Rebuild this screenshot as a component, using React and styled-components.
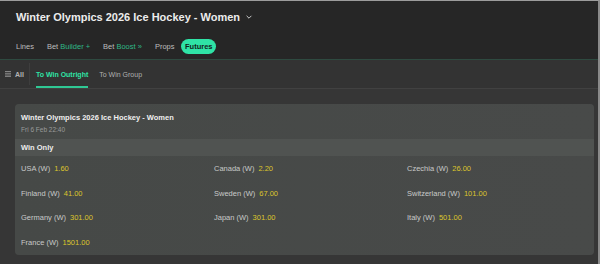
import React from 'react'
import styled, { createGlobalStyle } from 'styled-components'

const GlobalStyle = createGlobalStyle`
  body {
    margin: 0;
    background: #363636;
    font-family: "Liberation Sans", Arial, sans-serif;
  }
`

const Page = styled.div`
  width: 600px;
  height: 264px;
  box-sizing: border-box;
  border-top: 1px solid #9c9c9c;
  border-right: 2px solid #8a8a8a;
  background: #363636;
  overflow: hidden;
`

const Header = styled.div`
  background: #262626;
  padding: 0 16px;
  height: 58px;
  border-bottom: 1px solid #2e4a40;
`

const TitleRow = styled.div`
  height: 32px;
  display: flex;
  align-items: center;
  gap: 5px;
  color: #ececec;
  font-weight: bold;
  font-size: 11px;
`

const NavRow = styled.div`
  height: 26px;
  display: flex;
  align-items: center;
  gap: 1px;
  margin-left: -6px;
`

const NavItem = styled.div`
  padding: 0 ${p => (p.$active ? '3.5px' : '6px')};
  height: 15px;
  line-height: 15px;
  border-radius: 8px;
  font-size: 7.5px;
  color: ${p => (p.$active ? '#12231c' : '#bdbdbd')};
  background: ${p => (p.$active ? '#2fe3a6' : 'transparent')};
  font-weight: ${p => (p.$active ? 'bold' : 'normal')};
`

const Accent = styled.span`
  color: #2fb886;
`

const SubNav = styled.div`
  height: 28px;
  background: #333333;
  border-bottom: 1px solid #414141;
  display: flex;
  align-items: stretch;
  font-size: 7px;
`

const AllButton = styled.div`
  display: flex;
  align-items: center;
  gap: 4px;
  padding: 0 5px;
  color: #b4b4b4;
  font-weight: bold;
  border-right: 1px solid #3e3e3e;
  margin: 3px 0;
`

const Tab = styled.div`
  display: flex;
  align-items: center;
  margin-left: ${p => (p.$first ? '6px' : '11px')};
  color: ${p => (p.$active ? '#2fe3a6' : '#b0b0b0')};
  font-weight: ${p => (p.$active ? 'bold' : 'normal')};
  box-shadow: ${p => (p.$active ? 'inset 0 -2px 0 #2fc894' : 'none')};
`

const Content = styled.div`
  padding: 15px 4px 0 15px;
`

const Card = styled.div`
  width: 579px;
  background: linear-gradient(90deg, #464947, #484a49);
  border-radius: 4px;
  overflow: hidden;
`

const CardHead = styled.div`
  height: 35px;
  box-sizing: border-box;
  padding: 3px 6px 0;
  display: flex;
  flex-direction: column;
  justify-content: center;
  gap: 4px;
`

const CardTitle = styled.div`
  color: #efefef;
  font-weight: bold;
  font-size: 7.5px;
`

const CardDate = styled.div`
  color: #9a9c9b;
  font-size: 6.5px;
`

const Band = styled.div`
  height: 17px;
  background: #505351;
  padding: 0 6px;
  display: flex;
  align-items: center;
  color: #ededed;
  font-weight: bold;
  font-size: 7.5px;
`

const Grid = styled.div`
  display: grid;
  grid-template-columns: repeat(3, 193px);
  grid-auto-rows: 24.8px;
  padding-left: 6px;
`

const Cell = styled.div`
  display: flex;
  align-items: center;
  gap: 4px;
  font-size: 7.5px;
`

const Team = styled.span`
  color: #c8cac9;
`

const Odds = styled.span`
  color: #dcc52c;
`

const teams = [
  ['USA (W)', '1.60'],
  ['Canada (W)', '2.20'],
  ['Czechia (W)', '26.00'],
  ['Finland (W)', '41.00'],
  ['Sweden (W)', '67.00'],
  ['Switzerland (W)', '101.00'],
  ['Germany (W)', '301.00'],
  ['Japan (W)', '301.00'],
  ['Italy (W)', '501.00'],
  ['France (W)', '1501.00'],
]

export default function App() {
  return (
    <Page>
      <GlobalStyle />
      <Header>
        <TitleRow>
          Winter Olympics 2026 Ice Hockey - Women
          <svg width="8" height="8" viewBox="0 0 10 10">
            <path d="M2 3.5 L5 6.5 L8 3.5" fill="none" stroke="#d0d0d0" strokeWidth="1.2" />
          </svg>
        </TitleRow>
        <NavRow>
          <NavItem>Lines</NavItem>
          <NavItem>Bet <Accent>Builder +</Accent></NavItem>
          <NavItem>Bet <Accent>Boost »</Accent></NavItem>
          <NavItem>Props</NavItem>
          <NavItem $active>Futures</NavItem>
        </NavRow>
      </Header>
      <SubNav>
        <AllButton>
          <svg width="6" height="6" viewBox="0 0 6 6">
            <path d="M0 0.5H6M0 2.3H6M0 4H6M0 5.6H6" stroke="#9a9a9a" strokeWidth="0.8" />
          </svg>
          All
        </AllButton>
        <Tab $first $active>To Win Outright</Tab>
        <Tab>To Win Group</Tab>
      </SubNav>
      <Content>
        <Card>
          <CardHead>
            <CardTitle>Winter Olympics 2026 Ice Hockey - Women</CardTitle>
            <CardDate>Fri 6 Feb 22:40</CardDate>
          </CardHead>
          <Band>Win Only</Band>
          <Grid>
            {teams.map(([name, odds]) => (
              <Cell key={name}>
                <Team>{name}</Team>
                <Odds>{odds}</Odds>
              </Cell>
            ))}
          </Grid>
        </Card>
      </Content>
    </Page>
  )
}
